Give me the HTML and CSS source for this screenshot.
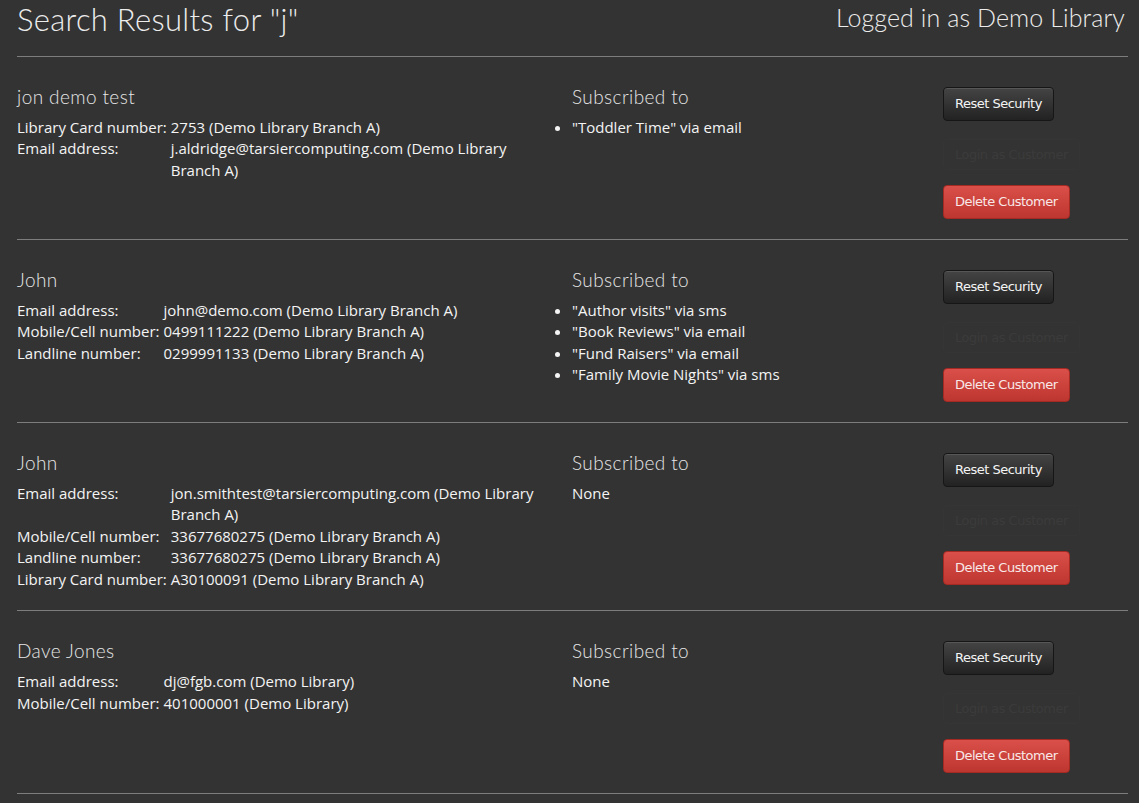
FILE: index.html
```html
<!DOCTYPE html>
<html lang="en">
<head>
<meta charset="utf-8">
<title>Search Results</title>
<link rel="stylesheet" href="styles.css">
</head>
<body>
<div class="page">
  <header class="top">
    <h1 class="title">Search Results for "j"</h1>
    <div class="login">Logged in as Demo Library</div>
  </header>

  <section class="customer">
    <div class="info">
      <h4 class="name">jon demo test</h4>
      <table class="fields">
        <tr><td class="lbl">Library Card number:</td><td>2753 (Demo Library Branch A)</td></tr>
        <tr><td class="lbl">Email address:</td><td>j.aldridge@tarsiercomputing.com (Demo Library Branch A)</td></tr>
      </table>
    </div>
    <div class="subs">
      <h4 class="name">Subscribed to</h4>
      <ul class="sublist">
        <li>"Toddler Time" via email</li>
      </ul>
    </div>
    <div class="actions">
      <button class="btn btn-inverse">Reset Security</button>
      <button class="btn btn-ghost">Login as Customer</button>
      <button class="btn btn-danger">Delete Customer</button>
    </div>
  </section>

  <section class="customer">
    <div class="info">
      <h4 class="name">John</h4>
      <table class="fields">
        <tr><td class="lbl">Email address:</td><td>john@demo.com (Demo Library Branch A)</td></tr>
        <tr><td class="lbl">Mobile/Cell number:</td><td>0499111222 (Demo Library Branch A)</td></tr>
        <tr><td class="lbl">Landline number:</td><td>0299991133 (Demo Library Branch A)</td></tr>
      </table>
    </div>
    <div class="subs">
      <h4 class="name">Subscribed to</h4>
      <ul class="sublist">
        <li>"Author visits" via sms</li>
        <li>"Book Reviews" via email</li>
        <li>"Fund Raisers" via email</li>
        <li>"Family Movie Nights" via sms</li>
      </ul>
    </div>
    <div class="actions">
      <button class="btn btn-inverse">Reset Security</button>
      <button class="btn btn-ghost">Login as Customer</button>
      <button class="btn btn-danger">Delete Customer</button>
    </div>
  </section>

  <section class="customer">
    <div class="info">
      <h4 class="name">John</h4>
      <table class="fields">
        <tr><td class="lbl">Email address:</td><td>jon.smithtest@tarsiercomputing.com (Demo Library Branch A)</td></tr>
        <tr><td class="lbl">Mobile/Cell number:</td><td>33677680275 (Demo Library Branch A)</td></tr>
        <tr><td class="lbl">Landline number:</td><td>33677680275 (Demo Library Branch A)</td></tr>
        <tr><td class="lbl">Library Card number:</td><td>A30100091 (Demo Library Branch A)</td></tr>
      </table>
    </div>
    <div class="subs">
      <h4 class="name">Subscribed to</h4>
      <p class="none">None</p>
    </div>
    <div class="actions">
      <button class="btn btn-inverse">Reset Security</button>
      <button class="btn btn-ghost">Login as Customer</button>
      <button class="btn btn-danger">Delete Customer</button>
    </div>
  </section>

  <section class="customer">
    <div class="info">
      <h4 class="name">Dave Jones</h4>
      <table class="fields">
        <tr><td class="lbl">Email address:</td><td>dj@fgb.com (Demo Library)</td></tr>
        <tr><td class="lbl">Mobile/Cell number:</td><td>401000001 (Demo Library)</td></tr>
      </table>
    </div>
    <div class="subs">
      <h4 class="name">Subscribed to</h4>
      <p class="none">None</p>
    </div>
    <div class="actions">
      <button class="btn btn-inverse">Reset Security</button>
      <button class="btn btn-ghost">Login as Customer</button>
      <button class="btn btn-danger">Delete Customer</button>
    </div>
  </section>
</div>
</body>
</html>
```

FILE: styles.css
```css
html, body {
  margin: 0;
  padding: 0;
  background: #333333;
  color: #f4f4f4;
  font-family: "Open Sans", "Liberation Sans", Arial, sans-serif;
  font-size: 15px;
  line-height: 1.4286;
}

.page {
  padding: 0 11px 0 17px;
}

.top {
  display: flex;
  justify-content: space-between;
  align-items: flex-start;
  height: 56px;
  border-bottom: 1px solid #7d7d7d;
}

.title {
  margin: 0;
  padding-top: 1px;
  font-family: "Lato", sans-serif;
  font-weight: 300;
  font-size: 31px;
  letter-spacing: 0.3px;
  line-height: 36px;
  color: #ececec;
}

.login {
  font-family: "Lato", sans-serif;
  font-weight: 300;
  font-size: 25px;
  letter-spacing: 0.1px;
  line-height: 30px;
  padding-top: 2px;
  padding-right: 3px;
  color: #ececec;
}

.customer {
  display: grid;
  grid-template-columns: 555px 371px 185px;
  padding: 29px 0 20px;
  border-bottom: 1px solid #7d7d7d;
}

.info {
  padding-right: 15px;
}

.name {
  margin: 0 0 9px;
  font-family: "Lato", sans-serif;
  font-weight: 300;
  font-size: 19px;
  letter-spacing: 0.4px;
  line-height: 22px;
  color: #e6e6e6;
}

.fields {
  border-collapse: collapse;
}

.fields td {
  padding: 0;
  vertical-align: top;
}

.fields td.lbl {
  white-space: nowrap;
  padding-right: 4px;
}

.sublist {
  margin: 0;
  padding: 0;
  list-style: disc outside;
}

.none {
  margin: 0;
}

.actions {
  display: flex;
  flex-direction: column;
  align-items: flex-start;
  padding-top: 1px;
}

.btn {
  font-family: "DejaVu Sans", sans-serif;
  font-size: 13px;
  letter-spacing: -0.5px;
  line-height: 20px;
  padding: 6px 11px;
  border-radius: 4px;
  border: 1px solid #111;
  cursor: pointer;
}

.btn-inverse {
  color: #f4f4f4;
  background: linear-gradient(#444444, #222222);
  border-color: #161616;
  box-shadow: inset 0 1px 0 rgba(255,255,255,0.1);
}

.btn-ghost {
  margin-top: 18px;
  height: 31px;
  padding: 4px 11px;
  color: #3b3b3b;
  background: #333333;
  border-color: #353535;
}

.btn-danger {
  margin-top: 15px;
  color: #f8e8e8;
  background: linear-gradient(#da4f49, #bd362f);
  border-color: #a52a24;
}
```
